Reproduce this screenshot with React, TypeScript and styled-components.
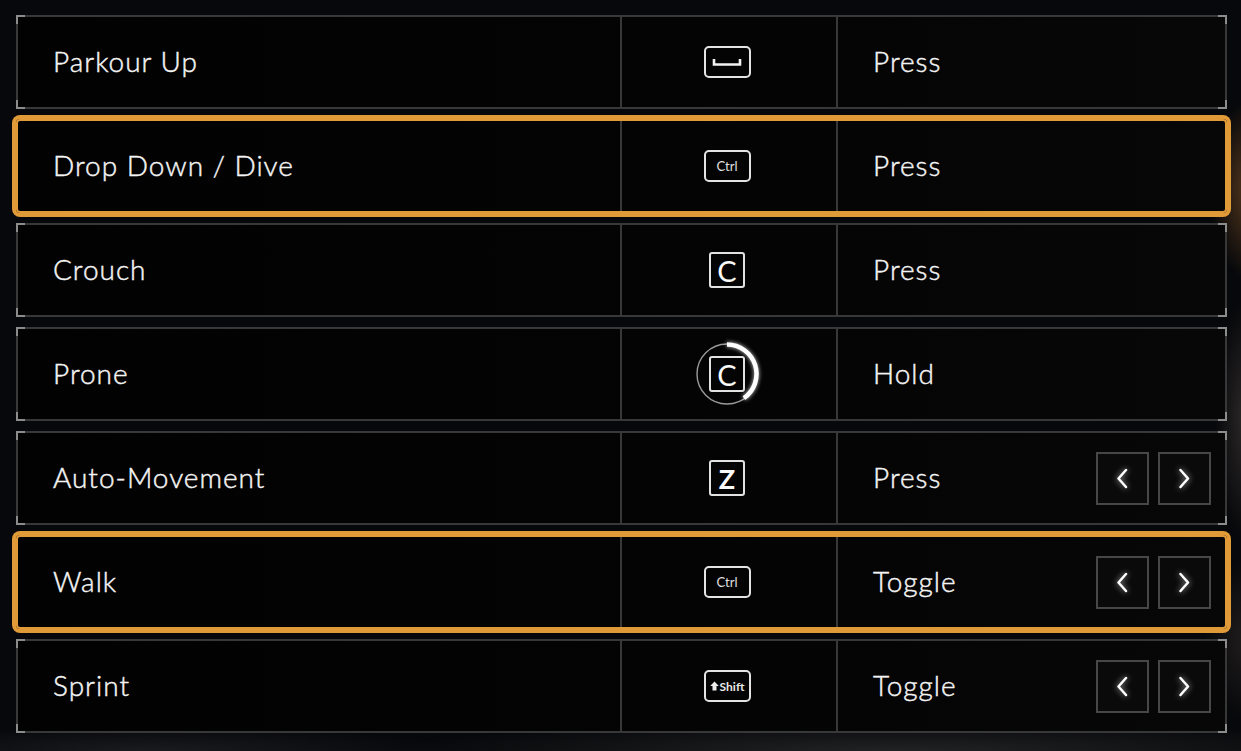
import styled, { createGlobalStyle, css } from 'styled-components';

const GlobalStyle = createGlobalStyle`
  html, body {
    margin: 0;
    height: 100%;
  }
  body {
    width: 1241px;
    height: 751px;
    overflow: hidden;
    font-family: Lato, "Open Sans", sans-serif;
    background:
      radial-gradient(ellipse 40px 90px at 1250px 190px, rgba(150, 95, 45, 0.55), transparent),
      radial-gradient(ellipse 30px 120px at 1245px 420px, rgba(90, 80, 75, 0.45), transparent),
      radial-gradient(ellipse 40px 80px at 1245px 640px, rgba(70, 60, 55, 0.4), transparent),
      radial-gradient(ellipse 500px 30px at 900px 751px, rgba(60, 60, 60, 0.5), transparent),
      radial-gradient(ellipse 300px 25px at 150px 751px, rgba(45, 45, 50, 0.5), transparent),
      #07080b;
  }
`;

const List = styled.div`
  display: flex;
  flex-direction: column;
  gap: 10px;
  width: 1211px;
  padding: 15px 0 0 16px;
`;

const bracket = '#8c8c8c';

const Row = styled.div<{ $active?: boolean }>`
  position: relative;
  box-sizing: border-box;
  height: 94px;
  display: grid;
  grid-template-columns: 602px 216px 1fr;
  border: 2px solid #383838;
  background: linear-gradient(90deg, #020202 0%, #040404 60%, #070707 100%);
  color: #f4f4f4;

  &::before {
    content: '';
    position: absolute;
    inset: -2px;
    pointer-events: none;
    background:
      linear-gradient(${bracket}, ${bracket}) left top / 9px 2px no-repeat,
      linear-gradient(${bracket}, ${bracket}) left top / 2px 9px no-repeat,
      linear-gradient(${bracket}, ${bracket}) left bottom / 9px 2px no-repeat,
      linear-gradient(${bracket}, ${bracket}) left bottom / 2px 9px no-repeat,
      linear-gradient(${bracket}, ${bracket}) right top / 9px 2px no-repeat,
      linear-gradient(${bracket}, ${bracket}) right top / 2px 9px no-repeat,
      linear-gradient(${bracket}, ${bracket}) right bottom / 9px 2px no-repeat,
      linear-gradient(${bracket}, ${bracket}) right bottom / 2px 9px no-repeat;
  }

  ${(p) =>
    p.$active &&
    css`
      border-color: #e09b38;
      border-radius: 4px;
      box-shadow: 0 0 0 4px #e09b38;
      &::before {
        display: none;
      }
    `}
`;

const Cell = styled.div`
  display: flex;
  align-items: center;
  padding-bottom: 3px;
  font-size: 28px;
  font-weight: 300;
  letter-spacing: 1px;
  -webkit-text-stroke: 0.45px #f4f4f4;
  white-space: nowrap;
`;

const ActionCell = styled(Cell)`
  padding-left: 35px;
`;

const KeyCell = styled(Cell)`
  justify-content: center;
  padding: 0 4px 0 0;
  border-left: 2px solid #383838;
  -webkit-text-stroke: 0;
`;

const ModeCell = styled(Cell)`
  justify-content: space-between;
  padding: 0 14px 3px 35px;
  border-left: 2px solid #383838;
`;

const WideKey = styled.div`
  box-sizing: border-box;
  width: 47px;
  height: 32px;
  border: 2px solid #e4e4e4;
  border-radius: 5px;
  display: flex;
  align-items: center;
  justify-content: center;
  gap: 1px;
  color: #e0e0e0;
  font-size: 13px;
  font-weight: 400;
  letter-spacing: 0;
`;

const ShiftLabel = styled.span`
  font-size: 12px;
  font-weight: 700;
  color: #e8e8e8;
`;

const SquareKey = styled.div<{ $bold?: boolean }>`
  box-sizing: border-box;
  width: 36px;
  height: 36px;
  border: 2px solid #e2e2e2;
  border-radius: 3px;
  display: flex;
  align-items: center;
  justify-content: center;
  color: #fafafa;
  font-size: ${(p) => (p.$bold ? '27px' : '29px')};
  font-weight: ${(p) => (p.$bold ? 700 : 400)};
  letter-spacing: 0;
  line-height: 1;
`;

const HoldRing = styled.div`
  position: relative;
  width: 66px;
  height: 66px;
  display: flex;
  align-items: center;
  justify-content: center;
`;

const RingSvg = styled.svg`
  position: absolute;
  inset: 0;
  overflow: visible;
`;

const ProgressArc = styled.path`
  fill: none;
  stroke: #ffffff;
  stroke-width: 4.5;
  filter: drop-shadow(0 0 2px rgba(255, 255, 255, 0.8));
`;

const Arrows = styled.div`
  display: flex;
  gap: 9px;
  margin-top: 3px;
`;

const ArrowButton = styled.button`
  box-sizing: border-box;
  width: 53px;
  height: 53px;
  padding: 0;
  border: 2px solid #474747;
  background: #0a0a0a;
  display: flex;
  align-items: center;
  justify-content: center;
  cursor: pointer;

  svg {
    filter: drop-shadow(0 0 3px rgba(255, 255, 255, 0.7));
  }
`;

type KeyKind = 'space' | 'ctrl' | 'c' | 'c-hold' | 'z' | 'shift';

type Binding = {
  action: string;
  key: KeyKind;
  mode: string;
  arrows?: boolean;
  active?: boolean;
};

const bindings: Binding[] = [
  { action: 'Parkour Up', key: 'space', mode: 'Press' },
  { action: 'Drop Down / Dive', key: 'ctrl', mode: 'Press', active: true },
  { action: 'Crouch', key: 'c', mode: 'Press' },
  { action: 'Prone', key: 'c-hold', mode: 'Hold' },
  { action: 'Auto-Movement', key: 'z', mode: 'Press', arrows: true },
  { action: 'Walk', key: 'ctrl', mode: 'Toggle', arrows: true, active: true },
  { action: 'Sprint', key: 'shift', mode: 'Toggle', arrows: true },
];

function KeyIcon({ kind }: { kind: KeyKind }) {
  switch (kind) {
    case 'space':
      return (
        <WideKey>
          <svg width="30" height="9" viewBox="0 0 30 9">
            <path d="M2 1 V6.5 H28 V1" fill="none" stroke="#f2f2f2" strokeWidth="2.6" />
          </svg>
        </WideKey>
      );
    case 'ctrl':
      return <WideKey>Ctrl</WideKey>;
    case 'shift':
      return (
        <WideKey>
          <svg width="9" height="10" viewBox="0 0 9 10">
            <path d="M4.5 0.5 L8.8 5 H6.5 V9.5 H2.5 V5 H0.2 Z" fill="#ececec" />
          </svg>
          <ShiftLabel>Shift</ShiftLabel>
        </WideKey>
      );
    case 'c':
      return <SquareKey>C</SquareKey>;
    case 'z':
      return <SquareKey $bold>Z</SquareKey>;
    case 'c-hold':
      return (
        <HoldRing>
          <RingSvg width="66" height="66" viewBox="0 0 66 66">
            <circle cx="33" cy="33" r="30" fill="none" stroke="#9a9a9a" strokeWidth="1.4" />
            <ProgressArc d="M33 3.5 A29.5 29.5 0 0 1 49.9 57.2" />
          </RingSvg>
          <SquareKey>C</SquareKey>
        </HoldRing>
      );
  }
}

function Chevron({ dir }: { dir: 'left' | 'right' }) {
  const d = dir === 'left' ? 'M10 2 L2.5 10.5 L10 19' : 'M2.5 2 L10 10.5 L2.5 19';
  return (
    <svg width="13" height="21" viewBox="0 0 13 21">
      <path d={d} fill="none" stroke="#ffffff" strokeWidth="2.5" strokeLinecap="round" strokeLinejoin="round" />
    </svg>
  );
}

export default function App() {
  return (
    <>
      <GlobalStyle />
      <List>
        {bindings.map((b) => (
          <Row key={b.action} $active={b.active}>
            <ActionCell>{b.action}</ActionCell>
            <KeyCell>
              <KeyIcon kind={b.key} />
            </KeyCell>
            <ModeCell>
              <span>{b.mode}</span>
              {b.arrows && (
                <Arrows>
                  <ArrowButton aria-label="previous">
                    <Chevron dir="left" />
                  </ArrowButton>
                  <ArrowButton aria-label="next">
                    <Chevron dir="right" />
                  </ArrowButton>
                </Arrows>
              )}
            </ModeCell>
          </Row>
        ))}
      </List>
    </>
  );
}
